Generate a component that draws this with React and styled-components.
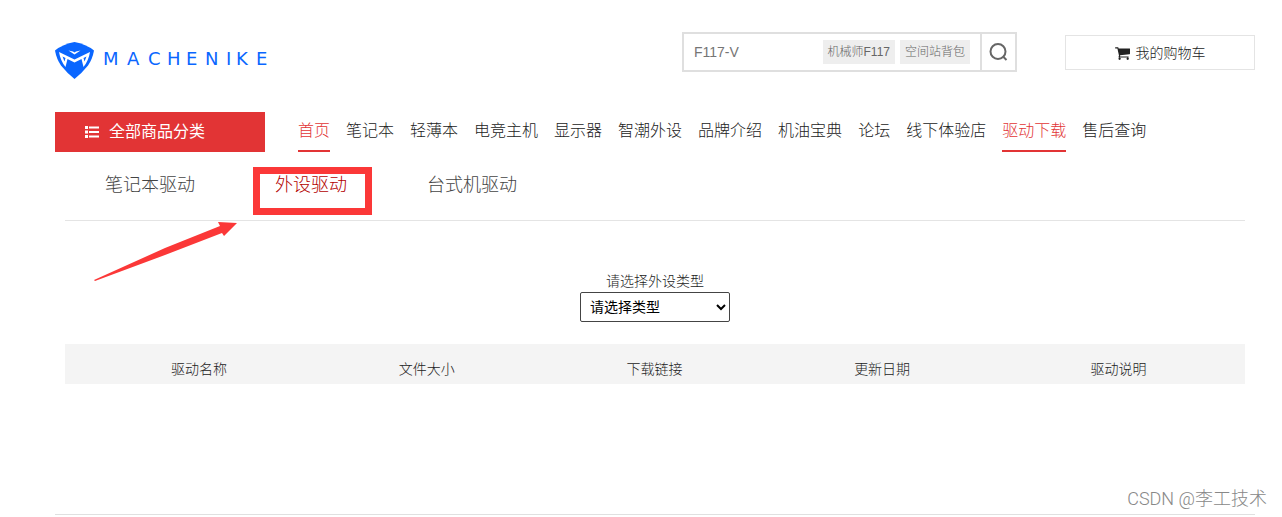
import React from "react";
import styled, { createGlobalStyle } from "styled-components";

const GlobalStyle = createGlobalStyle`
  * { box-sizing: border-box; }
  body {
    margin: 0;
    background: #fff;
    color: #222;
    font: 300 14px/20px "Liberation Sans", "Noto Sans CJK SC", sans-serif;
  }
  a { color: inherit; text-decoration: none; }
  ul { margin: 0; padding: 0; list-style: none; }
  input, button, select { font-family: inherit; }
`;

const Page = styled.div`
  position: relative;
  padding: 0 27px 0 55px;
`;

const Header = styled.header`
  display: flex;
  align-items: flex-start;
  padding-top: 32px;
  height: 112px;
`;

const LogoLink = styled.a`
  display: block;
  margin: 9px auto 0 0;
  svg { display: block; }
`;

const Wordmark = styled.text`
  font-family: "DejaVu Sans", sans-serif;
  font-size: 18px;
  font-weight: 400;
  fill: #0a66ff;
`;

const SearchForm = styled.form`
  display: flex;
  align-items: center;
  width: 335px;
  height: 40px;
  margin-right: 48px;
  border: 2px solid #dfdfdf;
`;

const SearchInput = styled.input`
  flex: 1;
  min-width: 0;
  height: 36px;
  padding: 0 10px;
  border: 0;
  outline: 0;
  background: transparent;
  font-size: 14px;
  color: #757575;
  &::placeholder { color: #757575; opacity: 1; }
`;

const HotWord = styled.a`
  height: 24px;
  margin-right: ${(p) => (p.$last ? 10 : 5)}px;
  padding: 0 5px;
  background: #eee;
  color: #666;
  font-size: 12px;
  line-height: 24px;
  white-space: nowrap;
`;

const SearchButton = styled.button`
  display: flex;
  align-items: center;
  justify-content: center;
  width: 35px;
  height: 36px;
  padding: 0;
  border: 0;
  border-left: 2px solid #dfdfdf;
  background: #fff;
`;

const CartLink = styled.a`
  display: flex;
  align-items: center;
  justify-content: center;
  gap: 6px;
  width: 190px;
  height: 35px;
  margin-top: 3px;
  border: 1px solid #e4e4e4;
`;

const MainNav = styled.nav`
  display: flex;
  height: 40px;
  font-size: 16px;
`;

const Categories = styled.a`
  display: flex;
  align-items: center;
  gap: 10px;
  width: 210px;
  padding-left: 30px;
  background: #e23435;
  color: #fff;
  font-weight: 400;
`;

const NavList = styled.ul`
  display: flex;
  gap: 16px;
  padding-left: 33px;
`;

const NavLink = styled.a`
  display: block;
  height: 40px;
  line-height: 38px;
  white-space: nowrap;
  color: ${(p) => (p.$active ? "#e23435" : "#222")};
  border-bottom: 2px solid ${(p) => (p.$active ? "#e23435" : "transparent")};
`;

const Content = styled.main`
  padding: 0 10px;
`;

const Tabs = styled.ul`
  display: flex;
  gap: 80px;
  height: 69px;
  padding: 18px 40px 0;
  border-bottom: 1px solid #e4e4e4;
  font-size: 18px;
  line-height: 30px;
`;

const Tab = styled.li`
  position: relative;
  color: ${(p) => (p.$active ? "#b30000" : "#444")};
`;

const Highlight = styled.span`
  position: absolute;
  left: -22px;
  top: -3px;
  width: 119px;
  height: 48px;
  border: 7px solid #fb3838;
  pointer-events: none;
`;

const Arrow = styled.svg`
  position: absolute;
  left: 90px;
  top: 216px;
  pointer-events: none;
`;

const TypePicker = styled.div`
  display: flex;
  flex-direction: column;
  align-items: center;
  padding: 50px 0 22px;
`;

const TypeSelect = styled.select`
  width: 150px;
  height: 30px;
  margin-top: 1px;
  padding: 0 5px;
  border: 1px solid #444;
  border-radius: 2px;
  background: #fff;
  color: #000;
  font-size: 14px;
`;

const DriverTable = styled.table`
  width: 100%;
  table-layout: fixed;
  border-collapse: collapse;
  background: #f4f4f4;
`;

const HeadCell = styled.th`
  width: ${(p) => p.$width};
  height: 40px;
  padding: 10px ${(p) => p.$right || 0}px 0 ${(p) => p.$left || 0}px;
  font-weight: 300;
  text-align: center;
`;

const Footer = styled.footer`
  margin-top: 130px;
  border-top: 1px solid #e0e0e0;
`;

const Watermark = styled.div`
  position: absolute;
  right: 15px;
  bottom: 4px;
  color: #888;
  font-family: Roboto, "Noto Sans CJK SC", sans-serif;
  font-size: 18px;
  line-height: 24px;
`;

const navItems = [
  "首页", "笔记本", "轻薄本", "电竞主机", "显示器", "智潮外设",
  "品牌介绍", "机油宝典", "论坛", "线下体验店", "驱动下载", "售后查询",
];
const activeNav = ["首页", "驱动下载"];

const columns = [
  { label: "驱动名称", width: "21%", left: 20 },
  { label: "文件大小", width: "19.3%" },
  { label: "下载链接", width: "19.3%" },
  { label: "更新日期", width: "19.3%" },
  { label: "驱动说明", width: "21.1%", right: 4 },
];

function Logo() {
  return (
    <svg width="216" height="40" viewBox="0 0 216 40" role="img" aria-label="MACHENIKE">
      <path
        fill="#0a66ff"
        d="M0 9.500Q8 3 19.500 1Q31 3 39 9.500Q37.500 18 33 24.500Q27 32 19.500 38Q12 32 6 24.500Q1.500 18 0 9.500Z"
      />
      <path
        fill="#fff"
        d="M4 11L19.500 18.500L35 11Q33.500 20 28.500 26L26.500 18L19.500 21.500L12.500 18L10.500 26Q5.500 20 4 11Z"
      />
      <path fill="#0a66ff" d="M7.500 15.500L10.500 17L9.500 20.500ZM31.500 15.500L28.500 17L29.500 20.500Z" />
      <path fill="#fff" d="M13.500 9.500L18 10.500L19.500 11.500L21 10.500L25.500 9.500L19.500 13.500Z" />
      <Wordmark x="48 72 93 112 131 150 171 181 201" y="24">MACHENIKE</Wordmark>
    </svg>
  );
}

function ListIcon() {
  return (
    <svg width="14" height="12" viewBox="0 0 14 12" fill="currentColor" aria-hidden="true">
      <path d="M0 0H3V3H0ZM0 4.500H3V7.500H0ZM0 9H3V12H0ZM4 .5H14V2.500H4ZM4 5H14V7H4ZM4 9.500H14V11.500H4Z" />
    </svg>
  );
}

function CartIcon() {
  return (
    <svg width="15" height="14" viewBox="0 0 1664 1536" fill="currentColor" aria-hidden="true">
      <path d="M640 1408q0 52-38 90t-90 38-90-38-38-90 38-90 90-38 90 38 38 90zm896 0q0 52-38 90t-90 38-90-38-38-90 38-90 90-38 90 38 38 90zm128-1088v512q0 24-16.500 42.500t-40.500 21.500l-1044 122q13 60 13 70 0 16-24 64h920q26 0 45 19t19 45-19 45-45 19h-1024q-26 0-45-19t-19-45q0-11 8-31.500t16-36 21.500-40 15.500-29.500l-177-823h-204q-26 0-45-19t-19-45 19-45 45-19h256q16 0 28.500 6.500t19.500 15.500 13 24.500 8 26 5.500 29.500 4.500 26h1201q26 0 45 19t19 45z" />
    </svg>
  );
}

export default function App() {
  return (
    <Page>
      <GlobalStyle />
      <Header>
        <LogoLink href="#"><Logo /></LogoLink>
        <SearchForm role="search" onSubmit={(e) => e.preventDefault()}>
          <SearchInput type="text" placeholder="F117-V" aria-label="搜索" />
          <HotWord href="#">机械师F117</HotWord>
          <HotWord href="#" $last>空间站背包</HotWord>
          <SearchButton type="submit" aria-label="搜索">
            <svg width="20" height="20" viewBox="0 0 20 20" fill="none" stroke="#666" strokeWidth="2">
              <circle cx="9" cy="9.500" r="7.500" />
              <path d="M14 14.500L17.500 18" />
            </svg>
          </SearchButton>
        </SearchForm>
        <CartLink href="#">
          <CartIcon />
          我的购物车
        </CartLink>
      </Header>

      <MainNav>
        <Categories href="#">
          <ListIcon />
          全部商品分类
        </Categories>
        <NavList>
          {navItems.map((item) => (
            <li key={item}>
              <NavLink href="#" $active={activeNav.includes(item)}>{item}</NavLink>
            </li>
          ))}
        </NavList>
      </MainNav>

      <Content>
        <Tabs>
          <Tab><a href="#">笔记本驱动</a></Tab>
          <Tab $active><a href="#">外设驱动</a><Highlight /></Tab>
          <Tab><a href="#">台式机驱动</a></Tab>
        </Tabs>
        <TypePicker>
          <label htmlFor="device-type">请选择外设类型</label>
          <TypeSelect id="device-type">
            <option>请选择类型</option>
          </TypeSelect>
        </TypePicker>
        <DriverTable>
          <thead>
            <tr>
              {columns.map((c) => (
                <HeadCell key={c.label} scope="col" $width={c.width} $left={c.left} $right={c.right}>
                  {c.label}
                </HeadCell>
              ))}
            </tr>
          </thead>
        </DriverTable>
      </Content>

      <Footer />
      <Arrow width="150" height="68" viewBox="0 0 150 68" aria-hidden="true">
        <path fill="#fb3838" d="M4 64L75 32L130 10L128 6L147 7L134 20L132 17L75 39L5 65Z" />
      </Arrow>
      <Watermark>CSDN @李工技术</Watermark>
    </Page>
  );
}
